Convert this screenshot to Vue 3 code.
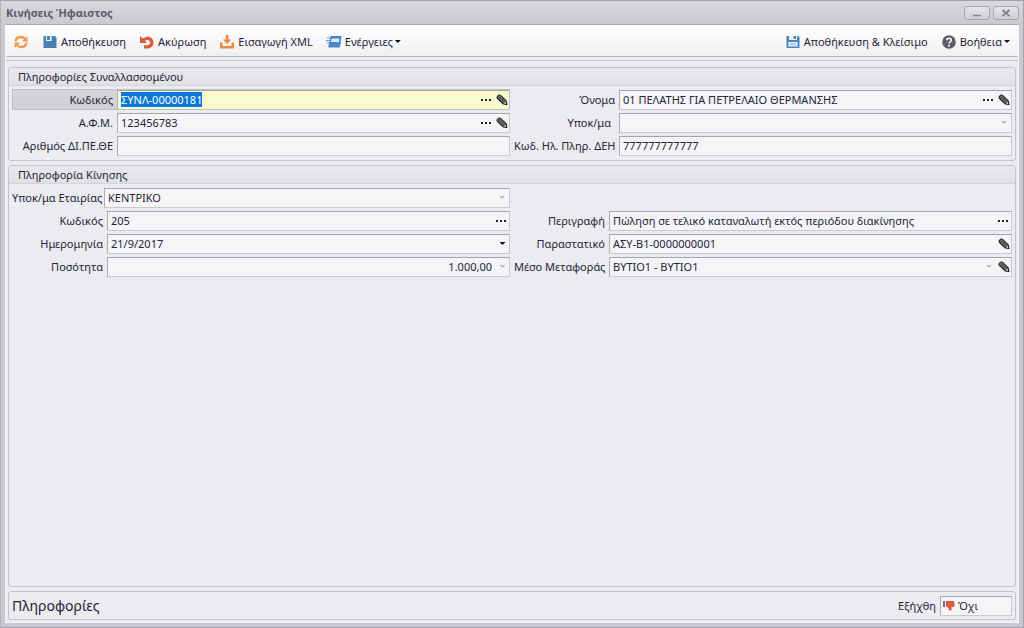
<script setup>
import { onMounted, ref } from 'vue'

const root = ref(null)

const partner = [
  [
    { id: 'p-code', label: 'Κωδικός', value: 'ΣΥΝΛ-00000181', tools: ['dots', 'pencil'], active: true },
    { id: 'p-name', label: 'Όνομα', value: '01 ΠΕΛΑΤΗΣ ΓΙΑ ΠΕΤΡΕΛΑΙΟ ΘΕΡΜΑΝΣΗΣ', tools: ['dots', 'pencil'] }
  ],
  [
    { id: 'p-vat', label: 'Α.Φ.Μ.', value: '123456783', tools: ['dots', 'pencil'] },
    { id: 'p-branch', label: 'Υποκ/μα', value: '', select: true, disabled: true, snug: true }
  ],
  [
    { id: 'p-dipethe', label: 'Αριθμός ΔΙ.ΠΕ.ΘΕ', value: '' },
    { id: 'p-power', label: 'Κωδ. Ηλ. Πληρ. ΔΕΗ', value: '777777777777' }
  ]
]

const movement = [
  [{ id: 'm-branch', label: 'Υποκ/μα Εταιρίας', value: 'ΚΕΝΤΡΙΚΟ', select: true, disabled: true, snug: true }],
  [
    { id: 'm-code', label: 'Κωδικός', value: '205', tools: ['dots'] },
    { id: 'm-desc', label: 'Περιγραφή', value: 'Πώληση σε τελικό καταναλωτή εκτός περιόδου διακίνησης', tools: ['dots'] }
  ],
  [
    { id: 'm-date', label: 'Ημερομηνία', value: '21/9/2017', tools: ['arrow'] },
    { id: 'm-doc', label: 'Παραστατικό', value: 'ΑΣΥ-Β1-0000000001', tools: ['pencil'] }
  ],
  [
    { id: 'm-qty', label: 'Ποσότητα', value: '1.000,00', tools: ['faint'], numeric: true },
    { id: 'm-transport', label: 'Μέσο Μεταφοράς', value: 'ΒΥΤΙΟ1 - ΒΥΤΙΟ1', select: true, disabled: true, tools: ['pencil'] }
  ]
]

const groups = [
  { key: 'partner', title: 'Πληροφορίες Συναλλασσομένου', rows: partner },
  { key: 'movement', title: 'Πληροφορία Κίνησης', rows: movement }
]

const toolNames = { dots: 'Αναζήτηση', pencil: 'Επεξεργασία', arrow: 'Άνοιγμα', faint: 'Άνοιγμα' }

onMounted(() => {
  const input = root.value.querySelector('#p-code')
  input.focus()
  input.select()
})
</script>

<template>
  <div ref="root" class="window">
    <header class="titlebar">
      <h1>Κινήσεις Ήφαιστος</h1>
      <div class="winbuttons">
        <button type="button" aria-label="Ελαχιστοποίηση">
          <svg width="10" height="10" viewBox="0 0 10 10"><path d="M1 7.500h8" stroke="#808086" stroke-width="1.500" /></svg>
        </button>
        <button type="button" aria-label="Κλείσιμο">
          <svg width="10" height="10" viewBox="0 0 10 10"><path d="M1.500 2l7 6M8.500 2l-7 6" stroke="#808086" stroke-width="1.700" /></svg>
        </button>
      </div>
    </header>

    <div class="body">
      <nav class="toolbar">
        <button type="button" aria-label="Ανανέωση">
          <svg width="16" height="16" viewBox="0 0 16 16" fill="none" stroke="#f09a44" stroke-width="2.400">
            <path d="M2.500 7.200C3 4.500 5 3 7.800 3c2 0 3.300.8 4.300 2" />
            <path d="M13.500 8.800C13 11.500 11 13 8.200 13c-2 0-3.300-.8-4.300-2" />
            <path d="M14.500 2v5.500H9zM1.500 14V8.500H7z" fill="#f09a44" stroke="none" />
          </svg>
        </button>
        <button type="button">
          <svg width="16" height="16" viewBox="0 0 16 16">
            <path d="M1.500 2H4v5h7V2h2l1.500 1.500V14h-13z" fill="#4a80b0" />
            <path d="M5 2h3v4H5zM9.500 2H11v5H9.500z" fill="#4a80b0" />
          </svg>
          <span>Αποθήκευση</span>
        </button>
        <button type="button">
          <svg width="16" height="16" viewBox="0 0 16 16">
            <path d="M1 2v7h7L5.800 6.800C8.500 5 11 6.200 11 8.500c0 2-1.600 3-4.500 2.800H5V14.500h3c4.200 0 6.500-2.400 6.500-6C14.500 3.500 9 .8 3.700 4.600z" fill="#dd5a3c" />
          </svg>
          <span>Ακύρωση</span>
        </button>
        <button type="button">
          <svg width="16" height="16" viewBox="0 0 16 16" fill="#ee8a3c">
            <path d="M6.700 1h2.800v4.500h3L8.100 10 3.700 5.500h3z" />
            <path d="M1 8.500h2.500V12h9V8.500H15V14.500H1z" />
          </svg>
          <span>Εισαγωγή XML</span>
        </button>
        <button type="button">
          <svg width="16" height="16" viewBox="0 0 16 16">
            <path d="M4.500 2h11l-1.200 9H3z" fill="#4384c8" />
            <path d="M5.500 4.500h8l-.5 3.500H5z" fill="#dcebf8" />
            <path d="M3 8.500h11.500l-.7 5H2.300z" fill="#4b87c9" />
            <path d="M1 4h3M0 6.500h3.500M1 9h2" stroke="#5b91cc" />
          </svg>
          <span>Ενέργειες</span><i class="caret"></i>
        </button>
        <div class="spacer"></div>
        <button type="button">
          <svg width="16" height="16" viewBox="0 0 16 16">
            <path d="M1.500 2H13l1.500 1.500V14h-13z" fill="#4a86ba" />
            <path d="M4 1.500h8V6H4zM3.500 8h9v4.500h-9z" fill="#eff5fa" />
            <path d="M8.500 2H11v3H8.500z" fill="#4a86ba" />
            <path d="M5 9.500h6M5 11h6" stroke="#9fbdd6" />
          </svg>
          <span>Αποθήκευση &amp; Κλείσιμο</span>
        </button>
        <button type="button">
          <svg width="16" height="16" viewBox="0 0 16 16">
            <circle cx="8" cy="8" r="6.800" fill="#5b5f69" />
            <path d="M5.800 6.300C5.800 3.500 10.300 3.500 10.300 6.200 10.300 7.900 8 7.700 8 9.600" fill="none" stroke="#fff" stroke-width="1.600" />
            <path d="M7.100 10.700h1.800v1.700H7.100z" fill="#fff" />
          </svg>
          <span>Βοήθεια</span><i class="caret"></i>
        </button>
      </nav>

      <main class="content">
        <section v-for="group in groups" :key="group.key" class="group" :class="group.key">
          <h2>{{ group.title }}</h2>
          <div class="rows">
            <div v-for="(row, r) in group.rows" :key="r" class="row">
              <div v-for="f in row" :key="f.id" class="cell" :class="{ active: f.active, snug: f.snug }">
                <label :for="f.id">{{ f.label }}</label>
                <div class="field">
                  <div v-if="f.select" class="picker">
                    <select :id="f.id" :disabled="f.disabled">
                      <option>{{ f.value }}</option>
                    </select>
                    <i class="caret faint"></i>
                  </div>
                  <input v-else :id="f.id" type="text" :value="f.value" :class="{ numeric: f.numeric }" />
                  <button v-for="t in f.tools" :key="t" type="button" :class="t" :aria-label="toolNames[t]">
                    <svg v-if="t === 'dots'" width="12" height="12" viewBox="0 0 12 12" fill="#222">
                      <path d="M1 5h2v2H1zM5 5h2v2H5zM9 5h2v2H9z" />
                    </svg>
                    <svg v-else-if="t === 'pencil'" width="12" height="12" viewBox="0 0 12 12">
                      <path d="M1 2.500L2.800 1l2 .4 5.400 5.200.8 4-4.300-.8L1.200 4.500z" fill="#777" stroke="#111" />
                      <path d="M2.800 2.500l6 6M1.500 3.500l6 6M4.500 2l5.300 5.200" stroke="#222" stroke-width=".7" />
                      <path d="M8.200 9.300l1.300-1.300.6 1.900z" fill="#eee" />
                    </svg>
                    <i v-else class="caret" :class="{ faint: t === 'faint' }"></i>
                  </button>
                </div>
              </div>
            </div>
          </div>
        </section>

        <footer class="status">
          <strong>Πληροφορίες</strong>
          <label for="exported">Εξήχθη</label>
          <div class="field exported">
            <svg width="12" height="12" viewBox="0 0 12 12">
              <path d="M0 1h2v6H0z" fill="#8d6a70" />
              <path d="M3 1h6.500C11 1 12 3 11.500 5c0 1.500-.7 2-1.700 2H8.500v3.500H6.500L5 7.500 3 6.500z" fill="#dc5b3e" />
            </svg>
            <input id="exported" type="text" value="Όχι" readonly />
          </div>
        </footer>
      </main>
    </div>
  </div>
</template>

<style>
body {
  margin: 0;
}
</style>

<style scoped>
* {
  box-sizing: border-box;
}
.window {
  min-height: 100vh;
  display: flex;
  flex-direction: column;
  padding: 0 4px 4px;
  border: 1px solid #a3a3ac;
  border-left-color: #b4b4bc;
  background: linear-gradient(#d8d8de, #c9c9d0 24px, #c6c6cf);
  color: #24243a;
  font: 11px/15px "Noto Sans", "Open Sans", sans-serif;
}
button,
input,
select {
  font: inherit;
  color: inherit;
}
button {
  display: flex;
  align-items: center;
  border: 0;
  padding: 0;
  background: none;
}
svg {
  display: block;
  flex: none;
}
.titlebar {
  display: flex;
  align-items: center;
  justify-content: space-between;
  height: 23px;
}
h1 {
  margin: 0;
  padding-left: 1px;
  font-size: 11px;
  line-height: 15px;
  color: #5c5c68;
}
.winbuttons {
  display: flex;
  gap: 3px;
}
.winbuttons button {
  width: 26px;
  height: 14px;
  justify-content: center;
  border: 1px solid #a5a5ad;
  border-radius: 3px;
  background: linear-gradient(#e4e4e8, #cfcfd5);
}
.body {
  flex: 1;
  display: flex;
  flex-direction: column;
  border: 1px solid #f5f5f9;
  border-top-color: #a9a9b1;
  background: #ebecef;
}
.toolbar {
  display: flex;
  align-items: center;
  gap: 13px;
  height: 32px;
  padding: 2px 8px 0 7px;
  border-bottom: 1px solid #b9b9c0;
  background: linear-gradient(#ffffff, #f0f0f3);
}
.toolbar button {
  gap: 2px;
}
.toolbar button span {
  padding-left: 1px;
}
.spacer {
  flex: 1;
}
.caret {
  width: 6px;
  height: 3px;
  background: #111;
  clip-path: polygon(0 0, 100% 0, 50% 100%);
}
.caret.faint {
  background: #b9b9be;
}
.content {
  flex: 1;
  display: flex;
  flex-direction: column;
  gap: 4px;
  margin-top: 3px;
  padding: 6px 2px 2px;
  border-top: 1px solid #c3c3c9;
}
.group {
  border: 1px solid #c3c4cb;
  border-radius: 3px;
}
.movement {
  flex: 1;
}
h2 {
  margin: 0;
  height: 18px;
  padding: 0 9px;
  border-bottom: 1px solid #d3d4d9;
  background: linear-gradient(#e8e9ec, #e0e1e4);
  font-size: 11px;
  font-weight: 400;
  line-height: 17px;
}
.rows {
  display: flex;
  flex-direction: column;
  gap: 2px;
  padding: 3px 3px 4px;
}
.row {
  display: grid;
  grid-template-columns: 1fr 1fr;
  gap: 4px;
}
.cell {
  display: flex;
  align-items: center;
  min-width: 0;
  height: 21px;
}
.cell label {
  flex: none;
  width: 105px;
  padding-right: 4px;
  text-align: right;
  white-space: nowrap;
}
.partner .cell.snug label {
  padding-right: 8px;
}
.movement .cell label {
  width: 95px;
}
.movement .cell.snug label {
  width: 92px;
}
.cell.active {
  background: linear-gradient(#d6d6da, #cfd0d5);
  outline: 1px solid #bfc0c6;
  outline-offset: -1px;
}
.field {
  flex: 1;
  display: flex;
  align-items: center;
  min-width: 0;
  height: 20px;
  border: 1px solid #c9c9cf;
  border-top-color: #a4a4ab;
  border-left-color: #adadb4;
  background: #f5f5f7;
}
.active .field {
  background: #fafad0;
}
input,
select {
  flex: 1;
  min-width: 0;
  width: 100%;
  height: 18px;
  margin: 0;
  padding: 0 3px;
  border: 0;
  outline: 0;
  border-radius: 0;
  background: transparent;
  appearance: none;
}
select:disabled {
  opacity: 1;
  color: inherit;
}
input::selection {
  background: #0a78d6;
  color: #fff;
}
input.numeric {
  padding-right: 4px;
  text-align: right;
}
.picker {
  flex: 1;
  display: flex;
  align-items: center;
  min-width: 0;
  height: 18px;
  padding-right: 4px;
}
.field button {
  justify-content: center;
  width: 17px;
  height: 18px;
}
.field button.arrow,
.field button.faint {
  width: 13px;
}
.field button.pencil {
  width: 15px;
}
.status {
  display: flex;
  align-items: center;
  height: 29px;
  padding: 0 3px;
  border: 1px solid #c3c4cb;
  border-radius: 3px;
}
.status strong {
  flex: 1;
  font-size: 14px;
  font-weight: 400;
}
.exported {
  flex: none;
  width: 72px;
  margin-left: 4px;
  padding-left: 2px;
}
</style>
